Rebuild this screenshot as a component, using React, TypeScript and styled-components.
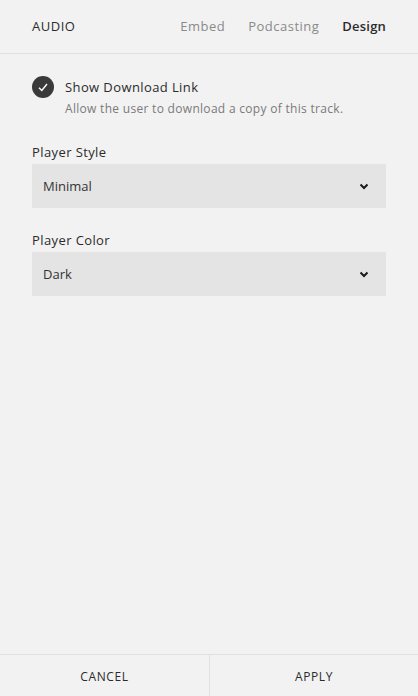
import styled, { createGlobalStyle } from "styled-components";

const GlobalStyle = createGlobalStyle`
  html, body {
    margin: 0;
    padding: 0;
    background: #f2f2f2;
  }
  * { box-sizing: border-box; }
`;

const Panel = styled("div")`
  display: flex;
  flex-direction: column;
  width: 418px;
  height: 696px;
  background: #f2f2f2;
  font-family: "Open Sans", "Liberation Sans", sans-serif;
  color: #333;
`;

const Header = styled("header")`
  display: flex;
  align-items: center;
  justify-content: space-between;
  height: 54px;
  padding: 0 32px 2px 32px;
  border-bottom: 1px solid #e0e0e0;
`;

const Title = styled("h1")`
  margin: 0;
  font-size: 13px;
  font-weight: 500;
  letter-spacing: 0.5px;
  color: #2b2b2b;
`;

const Tabs = styled("nav")`
  display: flex;
  gap: 23px;
`;

const Tab = styled("span")<{ $active?: boolean }>`
  font-size: 13px;
  letter-spacing: ${(p) => (p.$active ? "0.2px" : "0.5px")};
  font-weight: ${(p) => (p.$active ? 600 : 400)};
  color: ${(p) => (p.$active ? "#2b2b2b" : "#8a8a8a")};
`;

const Content = styled("main")`
  flex: 1;
  padding: 22px 32px 0 32px;
`;

const CheckRow = styled("div")`
  display: flex;
  gap: 11px;
  align-items: flex-start;
`;

const CheckCircle = styled("span")`
  display: flex;
  align-items: center;
  justify-content: center;
  flex: none;
  width: 22px;
  height: 22px;
  border-radius: 50%;
  background: #3a3a3a;
`;

const CheckText = styled("div")`
  display: flex;
  flex-direction: column;
  padding-top: 2px;
`;

const CheckLabel = styled("span")`
  font-size: 13px;
  font-weight: 500;
  letter-spacing: 0.4px;
  color: #2b2b2b;
  line-height: 18px;
`;

const CheckHint = styled("span")`
  margin-top: 6px;
  font-size: 12px;
  letter-spacing: 0.3px;
  color: #7a7a7a;
  line-height: 14px;
`;

const Field = styled("div")<{ $first?: boolean }>`
  display: flex;
  flex-direction: column;
  margin-top: ${(p) => (p.$first ? "27px" : "23px")};
`;

const FieldLabel = styled("label")`
  font-size: 13px;
  font-weight: 500;
  letter-spacing: 0.4px;
  color: #2b2b2b;
  line-height: 18px;
  margin-bottom: 3px;
`;

const Select = styled("div")`
  display: flex;
  align-items: center;
  justify-content: space-between;
  height: 44px;
  padding: 0 17px 0 11px;
  background: #e4e4e4;
  font-size: 13px;
  color: #333;
`;

const Footer = styled("footer")`
  display: grid;
  grid-template-columns: 209px 1fr;
  height: 42px;
  border-top: 1px solid #e0e0e0;
`;

const FooterButton = styled("button")<{ $divider?: boolean }>`
  border: none;
  border-left: ${(p) => (p.$divider ? "1px solid #e0e0e0" : "none")};
  background: transparent;
  font-family: inherit;
  font-size: 12px;
  font-weight: 500;
  letter-spacing: 0.6px;
  color: #2b2b2b;
  padding: 2px 0 0 0;
  cursor: pointer;
`;

function Chevron() {
  return (
    <svg width="10" height="7" viewBox="0 0 10 7">
      <path d="M1.5 1.5 L5 5 L8.5 1.5" fill="none" stroke="#1a1a1a" strokeWidth="2" />
    </svg>
  );
}

function Check() {
  return (
    <svg width="10" height="9" viewBox="0 0 10 9">
      <path d="M1 4.8 L3.8 7.5 L9 1" fill="none" stroke="#fff" strokeWidth="1.4" />
    </svg>
  );
}

export default function App() {
  return (
    <Panel>
      <GlobalStyle />
      <Header>
        <Title>AUDIO</Title>
        <Tabs>
          <Tab>Embed</Tab>
          <Tab>Podcasting</Tab>
          <Tab $active>Design</Tab>
        </Tabs>
      </Header>
      <Content>
        <CheckRow>
          <CheckCircle>
            <Check />
          </CheckCircle>
          <CheckText>
            <CheckLabel>Show Download Link</CheckLabel>
            <CheckHint>Allow the user to download a copy of this track.</CheckHint>
          </CheckText>
        </CheckRow>
        <Field $first>
          <FieldLabel>Player Style</FieldLabel>
          <Select>
            Minimal
            <Chevron />
          </Select>
        </Field>
        <Field>
          <FieldLabel>Player Color</FieldLabel>
          <Select>
            Dark
            <Chevron />
          </Select>
        </Field>
      </Content>
      <Footer>
        <FooterButton>CANCEL</FooterButton>
        <FooterButton $divider>APPLY</FooterButton>
      </Footer>
    </Panel>
  );
}
